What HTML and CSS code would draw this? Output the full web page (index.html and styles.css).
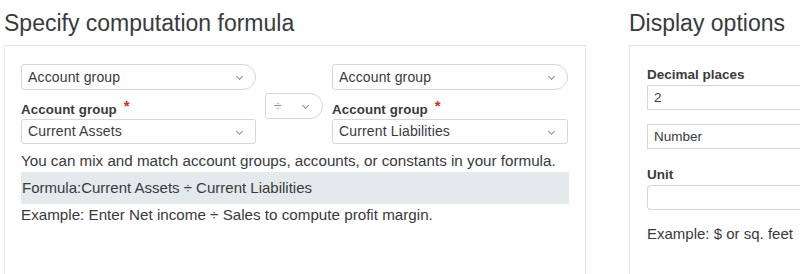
FILE: index.html
```html
<!DOCTYPE html>
<html>
<head>
<meta charset="UTF-8">
<title>Computation formula</title>
<link rel="stylesheet" href="styles.css">
</head>
<body>
<div class="page">
  <div class="section formula">
    <h2>Specify computation formula</h2>
    <div class="panel">
      <div class="operands">
        <div class="col">
          <div class="select pill">Account group <span class="chev"></span></div>
          <label class="lbl">Account group <span class="req">*</span></label>
          <div class="select">Current Assets <span class="chev"></span></div>
        </div>
        <div class="col op">
          <div class="select pill">&divide; <span class="chev"></span></div>
        </div>
        <div class="col">
          <div class="select pill">Account group <span class="chev"></span></div>
          <label class="lbl">Account group <span class="req">*</span></label>
          <div class="select">Current Liabilities <span class="chev"></span></div>
        </div>
      </div>
      <p class="hint">You can mix and match account groups, accounts, or constants in your formula.</p>
      <div class="result">Formula:Current Assets &divide; Current Liabilities</div>
      <p class="hint">Example: Enter Net income &divide; Sales to compute profit margin.</p>
    </div>
  </div>

  <div class="section options">
    <h2>Display options</h2>
    <div class="panel">
      <label class="lbl">Decimal places</label>
      <div class="field">2</div>
      <div class="field spaced">Number</div>
      <label class="lbl unit">Unit</label>
      <div class="field round"></div>
      <p class="hint">Example: $ or sq. feet</p>
    </div>
  </div>
</div>
</body>
</html>
```

FILE: styles.css
```css
* {
  margin: 0;
  padding: 0;
  box-sizing: border-box;
}

html, body {
  background: #fff;
  overflow: hidden;
}

body {
  font-family: "Liberation Sans", Arial, sans-serif;
  color: #393a3d;
  width: 800px;
  height: 274px;
}

.page {
  display: flex;
  padding-left: 4px;
  width: 800px;
  overflow: hidden;
}

h2 {
  font-size: 23px;
  font-weight: normal;
  line-height: 26px;
  padding-top: 10px;
  height: 45px;
  color: #393a3d;
}

.formula {
  width: 582px;
  flex: none;
}

.options {
  width: 240px;
  flex: none;
  margin-left: 43px;
}

.panel {
  border: 1px solid #e3e4e6;
  height: 240px;
}

.formula .panel {
  padding: 18px 16px 0 16px;
}

.options .panel {
  padding: 21px 0 0 17px;
}

.operands {
  display: flex;
  gap: 9px;
}

.col {
  display: flex;
  flex-direction: column;
  width: 235px;
}

.col:last-child {
  width: 236px;
}

.op {
  width: 58px;
  padding-top: 29px;
}

.select, .field {
  position: relative;
  height: 25px;
  border: 1px solid #d4d7dc;
  border-radius: 3px;
  font-size: 14px;
  letter-spacing: 0.15px;
  line-height: 23px;
  padding-left: 6px;
  color: #393a3d;
  background: #fff;
}

.select.pill {
  height: 26px;
  line-height: 24px;
  border-radius: 3px 13px 13px 3px;
}

.chev {
  position: absolute;
  right: 13px;
  top: 9px;
  width: 5px;
  height: 5px;
  border-right: 1px solid #8d9096;
  border-bottom: 1px solid #8d9096;
  transform: rotate(45deg);
}

.op .select {
  color: #8d9096;
  padding-left: 8px;
}

.op .chev {
  right: 14px;
}

.lbl {
  display: block;
  font-size: 13.3px;
  letter-spacing: 0.1px;
  font-weight: bold;
  color: #393a3d;
  line-height: 16px;
  margin-top: 12px;
  margin-bottom: 1px;
}

.req {
  color: #d52b1e;
  font-size: 15px;
  vertical-align: 3px;
  line-height: 0;
  margin-left: 3px;
}

.hint {
  font-size: 15.2px;
  line-height: 16px;
  margin-top: 9px;
}

.result {
  background: #e4e9ec;
  font-size: 15px;
  height: 32px;
  line-height: 31px;
  padding-left: 1px;
  margin-top: 3px;
}

.result + .hint {
  margin-top: 3px;
}

.options .lbl {
  margin-top: 0;
  font-size: 13.5px;
  letter-spacing: 0;
  margin-bottom: 2px;
}

.field {
  border-radius: 0;
  border-right: none;
  letter-spacing: 0;
  font-size: 13.5px;
}

.field.spaced {
  margin-top: 14px;
}

.lbl.unit {
  margin-top: 18px;
}

.field.round {
  border-radius: 4px 0 0 4px;
}

.options .hint {
  margin-top: 16px;
}

.options .hint {
  font-size: 15px;
}
```
